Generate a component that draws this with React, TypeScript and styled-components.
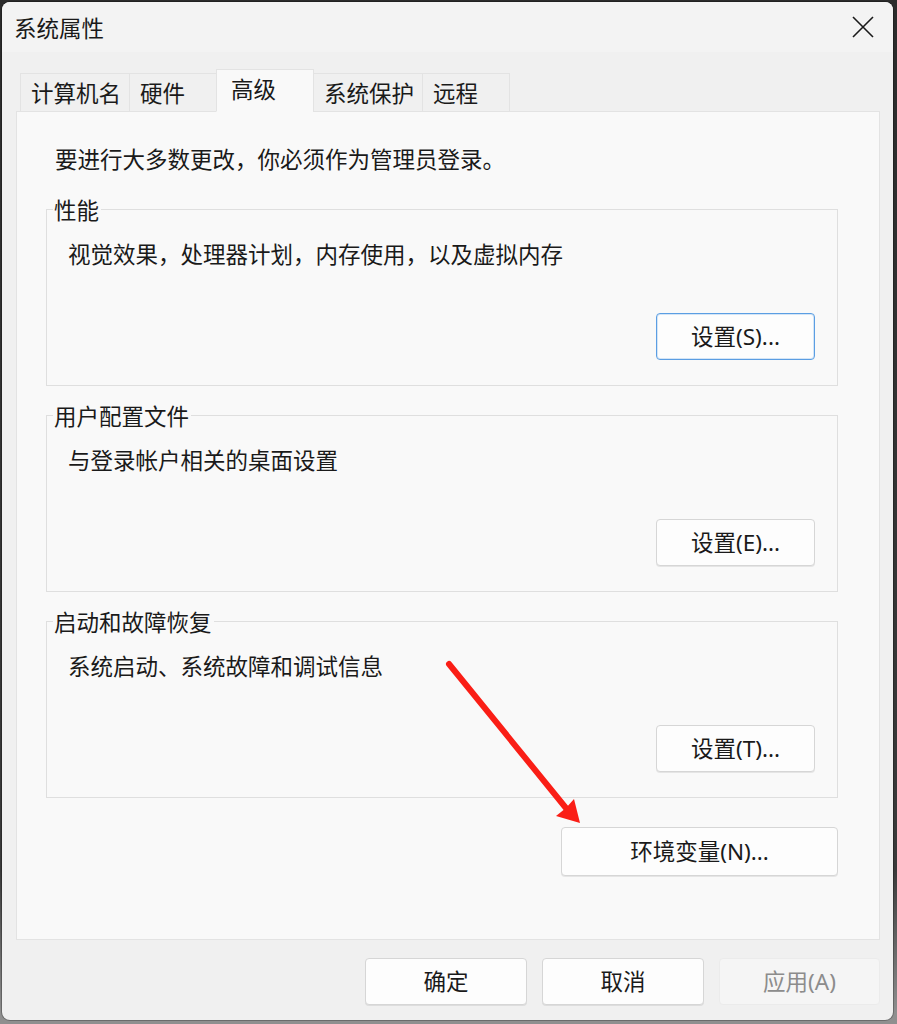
import React from "react";
import styled, { createGlobalStyle } from "styled-components";

const Global = createGlobalStyle`
  html, body { margin: 0; padding: 0; }
  body {
    background: #2e2e2e;
    font-family: "Segoe UI", "Noto Sans", "Noto Sans CJK SC", sans-serif;
    color: #1a1a1a;
  }
`;

const Stage = styled.div`
  position: relative;
  width: 897px;
  height: 1024px;
  overflow: hidden;
  background: linear-gradient(#2b2b2b 0%, #3a3a3a 85%, #8f8f8f 99%);
  padding: 2px 0 0 2px;
  box-sizing: border-box;
`;

const Window = styled.div`
  width: 891px;
  height: 1018px;
  background: #f0f0f0;
  border-radius: 8px;
  display: flex;
  flex-direction: column;
  box-sizing: border-box;
  overflow: hidden;
  box-shadow: 0 0 0 1px rgba(0, 0, 0, 0.25);
`;

const TitleBar = styled.div`
  height: 50px;
  flex: none;
  display: flex;
  align-items: center;
  justify-content: space-between;
  padding: 0 18px 0 12px;
  background: #f3f3f3;
`;

const Title = styled.div`
  font-size: 22.5px;
  line-height: 30px;
  font-family: "Noto Sans CJK SC", sans-serif;
  color: #1a1a1a;
`;

const CloseBtn = styled.div`
  width: 24px;
  height: 24px;
  display: flex;
  align-items: center;
  justify-content: center;
`;

const Body = styled.div`
  flex: 1;
  display: flex;
  flex-direction: column;
  padding: 18px 13px 15px 14px;
`;

const TabStrip = styled.div`
  display: flex;
  align-items: flex-end;
  padding-left: 5px;
  height: 42px;
  position: relative;
  z-index: 1;
  margin-bottom: -1px;
`;

const Tab = styled.div<{ $active?: boolean }>`
  box-sizing: border-box;
  height: ${(p) => (p.$active ? "43px" : "39px")};
  min-width: ${(p) => (p.$active ? "98px" : "88px")};
  padding: ${(p) => (p.$active ? "0 10px 5px 14px" : "0 8px 1px 10px")};
  display: flex;
  align-items: center;
  font-size: 22.5px;
  font-family: "Noto Sans CJK SC", sans-serif;
  line-height: 30px;
  background: ${(p) => (p.$active ? "#f9f9f9" : "#f0f0f0")};
  border: 1px solid #e3e3e3;
  border-bottom: ${(p) => (p.$active ? "1px solid #f9f9f9" : "1px solid #e3e3e3")};
  margin-left: -1px;
`;

const Panel = styled.div`
  box-sizing: border-box;
  width: 864px;
  height: 829px;
  background: #f9f9f9;
  border: 1px solid #e3e3e3;
  padding: 31px 41px 0 29px;
  display: flex;
  flex-direction: column;
`;

const Intro = styled.div`
  font-size: 22.5px;
  line-height: 30px;
  font-family: "Noto Sans CJK SC", sans-serif;
  padding-left: 9px;
  margin-bottom: 36px;
`;

const Group = styled.div`
  position: relative;
  box-sizing: border-box;
  height: 177px;
  border: 1px solid #dfdfdf;
  padding: 28px 22px 25px 21px;
  display: flex;
  flex-direction: column;
  margin-bottom: 29px;
`;

const Legend = styled.span`
  position: absolute;
  top: -16px;
  left: 6px;
  padding: 0 2px 0 1px;
  background: #f9f9f9;
  font-size: 22.5px;
  line-height: 30px;
  font-family: "Noto Sans CJK SC", sans-serif;
`;

const Desc = styled.div`
  font-size: 22.5px;
  line-height: 30px;
  font-family: "Noto Sans CJK SC", sans-serif;
  flex: 1;
`;

const ButtonRow = styled.div`
  display: flex;
  justify-content: flex-end;
  gap: 15px;
`;

const Button = styled.div<{ $focus?: boolean; $disabled?: boolean; $w?: number; $h?: number }>`
  box-sizing: border-box;
  width: ${(p) => p.$w ?? 159}px;
  height: ${(p) => p.$h ?? 47}px;
  border-radius: 4px;
  display: flex;
  align-items: center;
  justify-content: center;
  font-size: 22.5px;
  line-height: 30px;
  font-family: "Segoe UI", "Noto Sans", "Noto Sans CJK SC", sans-serif;
  color: ${(p) => (p.$disabled ? "#8c8c8c" : "#1a1a1a")};
  background: ${(p) => (p.$disabled ? "#f5f5f5" : "#fdfdfd")};
  border: 1px solid
    ${(p) => (p.$focus ? "#5b9ee3" : p.$disabled ? "#ebebeb" : "#d6d6d6")};
  box-shadow: ${(p) =>
    p.$focus
      ? "inset 0 0 0 1px rgba(91,158,227,0.25)"
      : p.$disabled
      ? "none"
      : "0 1px 0 rgba(0,0,0,0.08)"};
`;

const EnvRow = styled.div`
  display: flex;
  justify-content: flex-end;
  margin-top: 0px;
`;

const Footer = styled.div`
  display: flex;
  justify-content: flex-end;
  gap: 15px;
  padding-top: 18px;
`;

const Overlay = styled.svg`
  position: absolute;
  left: 0;
  top: 0;
  pointer-events: none;
`;

const groups = [
  { title: "性能", desc: "视觉效果，处理器计划，内存使用，以及虚拟内存", btn: "设置(S)...", focus: true },
  { title: "用户配置文件", desc: "与登录帐户相关的桌面设置", btn: "设置(E)..." },
  { title: "启动和故障恢复", desc: "系统启动、系统故障和调试信息", btn: "设置(T)..." },
];

const tabs = ["计算机名", "硬件", "高级", "系统保护", "远程"];

export default function App() {
  return (
    <Stage>
      <Global />
      <Window>
        <TitleBar>
          <Title>系统属性</Title>
          <CloseBtn>
            <svg width="22" height="22" viewBox="0 0 22 22">
              <path d="M1 1 L21 21 M21 1 L1 21" stroke="#1a1a1a" strokeWidth="1.6" fill="none" />
            </svg>
          </CloseBtn>
        </TitleBar>
        <Body>
          <TabStrip>
            {tabs.map((t) => (
              <Tab key={t} $active={t === "高级"}>
                {t}
              </Tab>
            ))}
          </TabStrip>
          <Panel>
            <Intro>要进行大多数更改，你必须作为管理员登录。</Intro>
            {groups.map((g) => (
              <Group key={g.title}>
                <Legend>{g.title}</Legend>
                <Desc>{g.desc}</Desc>
                <ButtonRow>
                  <Button $focus={g.focus}>{g.btn}</Button>
                </ButtonRow>
              </Group>
            ))}
            <EnvRow>
              <Button $w={277} $h={49}>环境变量(N)...</Button>
            </EnvRow>
          </Panel>
          <Footer>
            <Button $w={162}>确定</Button>
            <Button $w={162}>取消</Button>
            <Button $w={161} $disabled>应用(A)</Button>
          </Footer>
        </Body>
      </Window>
      <Overlay width="897" height="1024" viewBox="0 0 897 1024">
        <line x1="449" y1="664" x2="570" y2="813" stroke="#fa1e16" strokeWidth="6" strokeLinecap="round" />
        <polygon points="580,823 556,816 566,808 574,799" fill="#fa1e16" />
      </Overlay>
    </Stage>
  );
}
